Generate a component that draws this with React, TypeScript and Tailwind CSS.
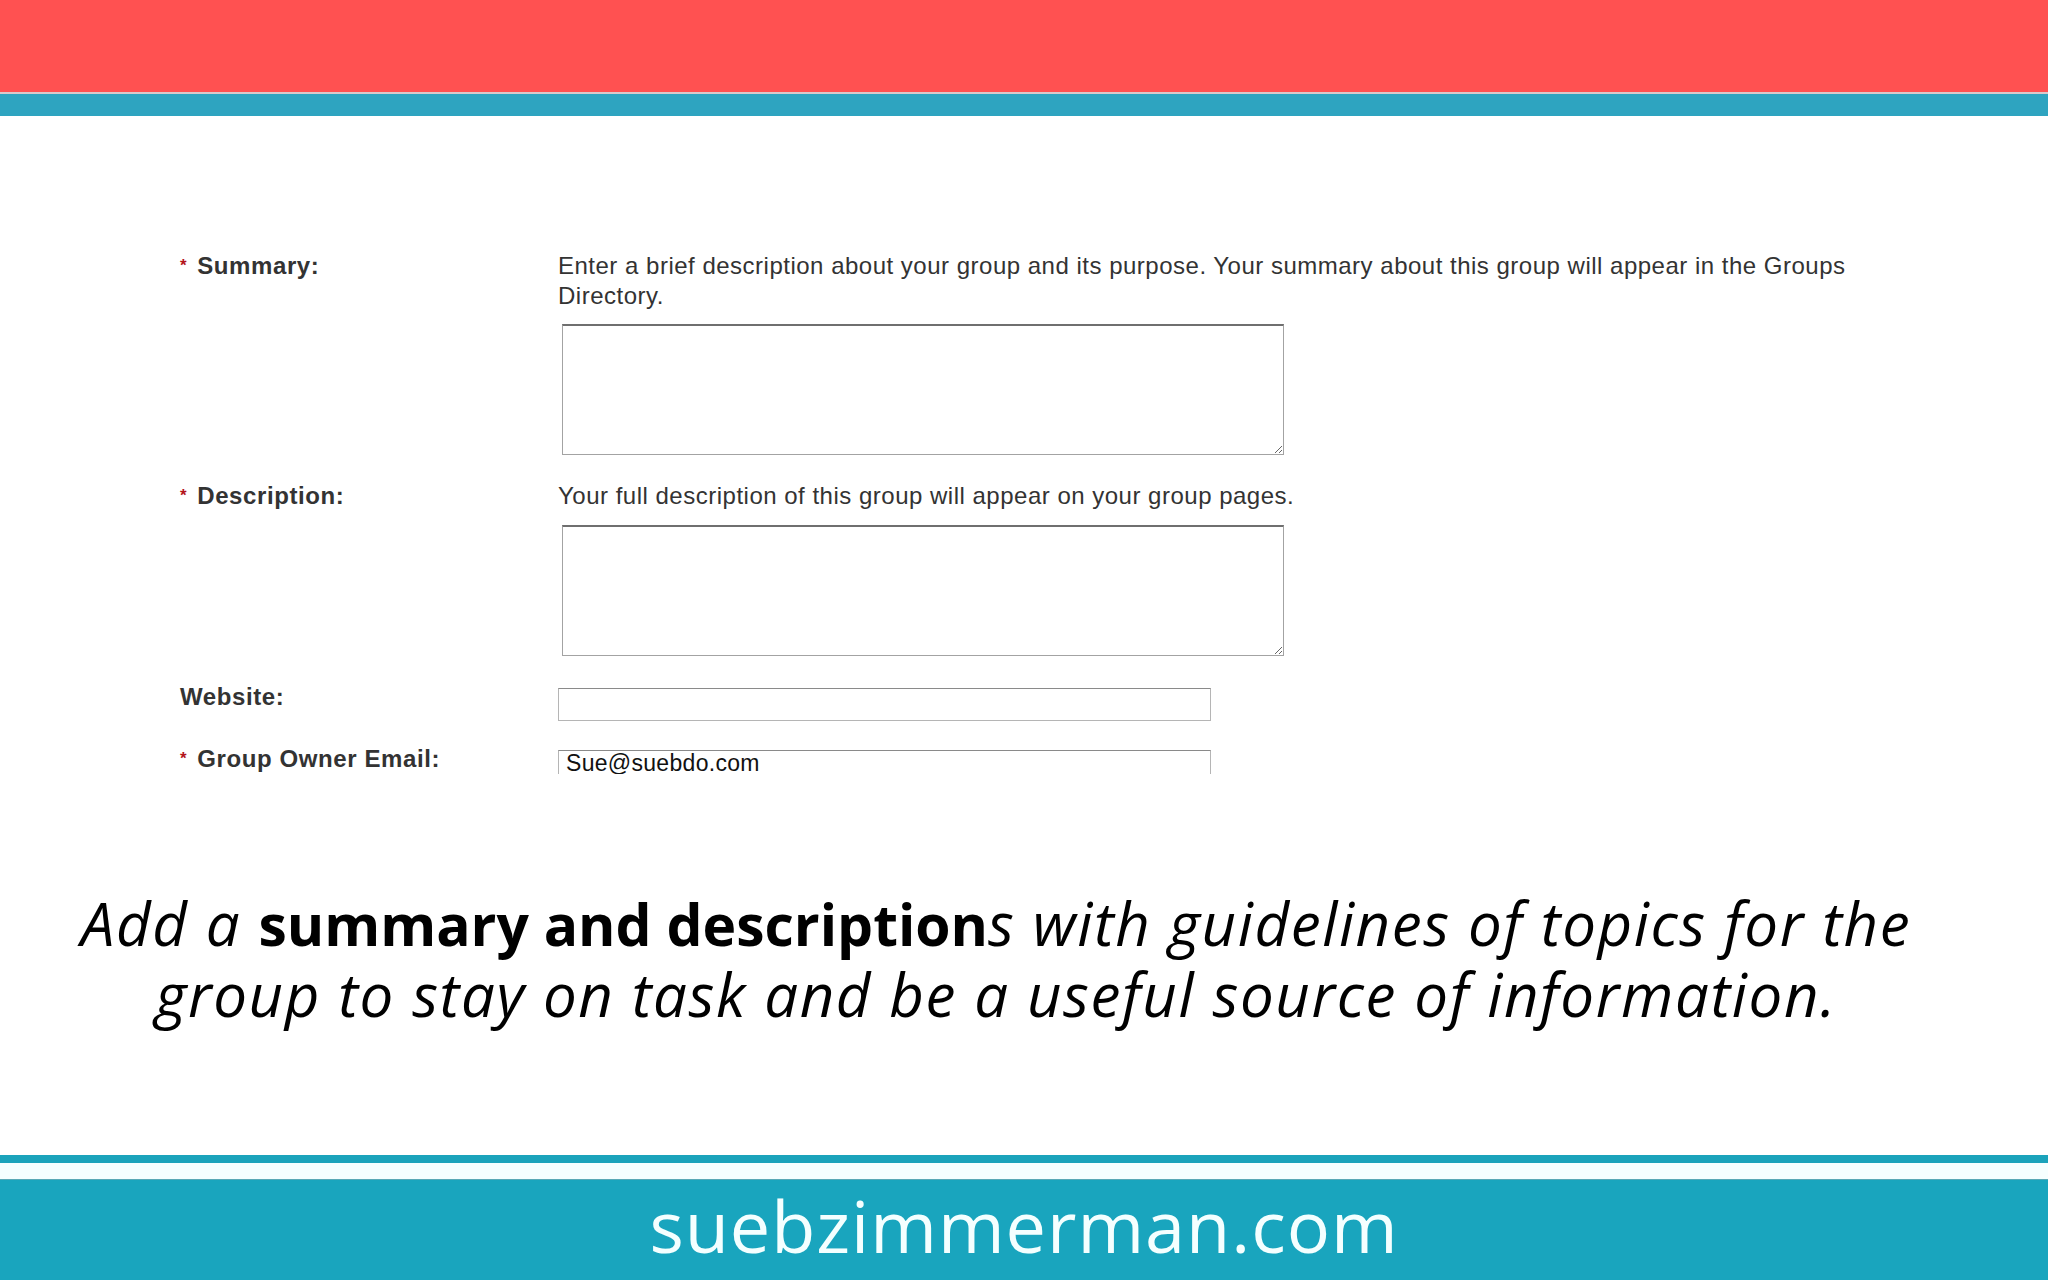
import React from "react";

type FieldLabelProps = {
  text: string;
  required?: boolean;
};

function FieldLabel({ text, required = false }: FieldLabelProps) {
  return (
    <div className="w-[378px] shrink-0 text-[24px] font-bold leading-[30px] tracking-[0.6px] text-[#333]">
      {required && <span className="mr-[10px] align-top text-[17px] text-[#b3141b]">*</span>}
      {text}
    </div>
  );
}

function HelpText({ children }: { children: React.ReactNode }) {
  return <p className="text-[24px] leading-[30px] tracking-[0.5px] text-[#333]">{children}</p>;
}

function Area() {
  return (
    <textarea
      className="ml-[4px] block h-[131px] w-[722px] resize border border-[#a3a3a3] border-t-2 border-t-[#6f6f6f] bg-white outline-none"
      readOnly
    />
  );
}

export default function App() {
  return (
    <div className="flex h-[1280px] w-[2048px] flex-col overflow-hidden bg-white font-['Liberation_Sans',Arial,sans-serif]">
      {/* top bands */}
      <div className="h-[92px] bg-[#ff5151]" />
      <div className="h-[2px] bg-[#d9c9cc]" />
      <div className="h-[22px] bg-[#2ea4c0]" />

      {/* form screenshot */}
      <div className="pl-[180px] pt-[135px]">
        <div className="flex">
          <FieldLabel text="Summary:" required />
          <div>
            <HelpText>
              Enter a brief description about your group and its purpose. Your summary about this group will appear in the Groups
              <br />
              Directory.
            </HelpText>
            <div className="mt-[13px]">
              <Area />
            </div>
          </div>
        </div>

        <div className="mt-[26px] flex">
          <FieldLabel text="Description:" required />
          <div>
            <HelpText>Your full description of this group will appear on your group pages.</HelpText>
            <div className="mt-[14px]">
              <Area />
            </div>
          </div>
        </div>

        <div className="mt-[26px] flex">
          <FieldLabel text="Website:" />
          <div className="mt-[6px] h-[33px] w-[653px] border border-[#b5b5b5] border-t-[#8a8a8a] bg-white" />
        </div>

        <div className="mt-[23px] flex">
          <FieldLabel text="Group Owner Email:" required />
          <div className="mt-[6px] h-[24px] w-[653px] overflow-hidden border border-b-0 border-[#b5b5b5] border-t-[#8a8a8a] bg-white pl-[7px] text-[23px] leading-[25px] tracking-[0.3px] text-[#111]">
            Sue@suebdo.com
          </div>
        </div>
      </div>

      {/* caption */}
      <p className="mt-[114px] pr-[56px] text-center font-['Open_Sans',sans-serif] text-[60px] font-normal italic leading-[70px] tracking-[1.6px] text-black">
        Add a{" "}
        <span className="text-[57px] font-bold not-italic tracking-normal">summary and description</span>s with guidelines of topics for the
        <br />
        group to stay on task and be a useful source of information.
      </p>

      {/* footer */}
      <div className="mt-auto">
        <div className="h-[8px] bg-[#1ba3bb]" />
        <div className="h-[17px] border-b border-[#5aa9b6] bg-[#f6ffff]" />
        <div className="flex h-[100px] items-center justify-center bg-[#19a5be]">
          <span className="-mt-[10px] font-['Open_Sans',sans-serif] text-[72px] font-normal leading-none tracking-[1px] text-[#f4ffff]">
            suebzimmerman.com
          </span>
        </div>
      </div>
    </div>
  );
}
